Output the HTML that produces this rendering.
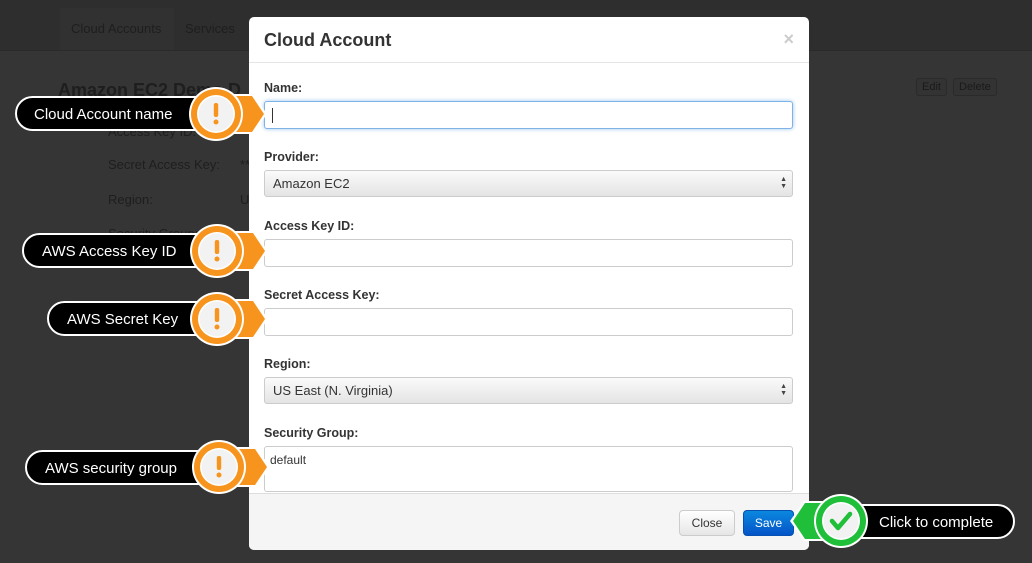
<!DOCTYPE html>
<html><head><meta charset="utf-8"><style>
body{margin:0;width:1032px;height:563px;overflow:hidden;background:#353535;font-family:"Liberation Sans",Arial,sans-serif;position:relative}
.top{position:absolute;left:0;top:0;width:1032px;height:50px;background:#2e2e2e;border-bottom:1px solid #2a2a2a}
.bg{position:absolute;color:#1e1e1e;font-size:13px}
.bgb{position:absolute;border:1px solid #2a2a2a;border-radius:3px;background:#333;color:#1a1a1a;font-size:11px;padding:2px 5px}
.modal{position:absolute;left:249px;top:17px;width:560px;height:533px;background:#fff;border-radius:5px;overflow:hidden}
.hd{height:45px;border-bottom:1px solid #e5e5e5;position:relative}
.hd h3{margin:0;position:absolute;left:15px;top:13px;font-size:18px;font-weight:bold;color:#333}
.x{position:absolute;right:15px;top:12px;font-size:18px;color:#ccc;font-weight:bold}
.lbl{position:absolute;left:15px;font-size:12.5px;font-weight:bold;color:#333}
.inp{position:absolute;left:15px;width:529px;height:26px;border:1px solid #ccc;border-radius:3px;box-sizing:border-box;background:#fff}
.sel{background:linear-gradient(#fafafa,#e4e4e4);font-size:13px;color:#333;padding:5px 8px}
.arr{position:absolute;right:5px;top:5px;font-size:7px;line-height:7px;color:#444}
.ft{position:absolute;left:0;top:476px;width:560px;height:57px;background:#f5f5f5;border-top:1px solid #ddd}
.btn{position:absolute;top:16px;height:26px;border-radius:4px;font-size:12px;box-sizing:border-box;text-align:center;line-height:24px}
</style></head><body>
<div class="top"></div>
<div style="position:absolute;left:60px;top:8px;width:114px;height:42px;background:#313131"></div>
<div class="bg" style="left:71px;top:21px">Cloud Accounts</div>
<div class="bg" style="left:185px;top:21px">Services</div>
<div class="bg" style="left:58px;top:80px;font-size:18px;font-weight:bold">Amazon EC2 Demo D</div>
<div class="bg" style="left:108px;top:124px">Access Key ID:</div>
<div class="bg" style="left:108px;top:157px">Secret Access Key:</div>
<div class="bg" style="left:240px;top:157px">**</div>
<div class="bg" style="left:108px;top:192px">Region:</div>
<div class="bg" style="left:240px;top:192px">U</div>
<div class="bg" style="left:108px;top:226px">Security Group:</div>
<div class="bgb" style="left:916px;top:78px">Edit</div>
<div class="bgb" style="left:953px;top:78px">Delete</div>

<div class="modal">
<div class="hd"><h3>Cloud Account</h3><span class="x">×</span></div>
<div class="lbl" style="top:64px">Name:</div>
<div class="inp" style="top:84px;height:28px;border-color:#7fb3e8;box-shadow:0 0 4px #9cc6ef"><div style="position:absolute;left:7px;top:6px;width:1px;height:15px;background:#333"></div></div>
<div class="lbl" style="top:133px">Provider:</div>
<div class="inp sel" style="top:153px;height:27px">Amazon EC2<div class="arr">▲<br>▼</div></div>
<div class="lbl" style="top:202px">Access Key ID:</div>
<div class="inp" style="top:222px;height:28px"></div>
<div class="lbl" style="top:271px">Secret Access Key:</div>
<div class="inp" style="top:291px;height:28px"></div>
<div class="lbl" style="top:340px">Region:</div>
<div class="inp sel" style="top:360px;height:27px">US East (N. Virginia)<div class="arr">▲<br>▼</div></div>
<div class="lbl" style="top:409px">Security Group:</div>
<div class="inp" style="top:429px;height:46px;font-size:12px;color:#333;padding:6px 5px">default</div>
<div class="ft">
<div class="btn" style="left:430px;width:56px;border:1px solid #ccc;background:linear-gradient(#fff,#e6e6e6);color:#333">Close</div>
<div class="btn" style="left:494px;width:51px;background:linear-gradient(#0a88e0,#0654c8);color:#fff;border:1px solid #0550b0">Save</div>
</div>
</div>

<svg width="1032" height="563" style="position:absolute;left:0;top:0" font-family="Liberation Sans,Arial,sans-serif">
<defs>
<g id="orange">
<path d="M0,-20 L37,-20 L51,0 L37,20 L0,20 Z" fill="#fff"/>
<path d="M0,-18 L36,-18 L48,0 L36,18 L0,18 Z" fill="#f7941d"/>
<circle r="27" fill="#fff"/><circle r="25" fill="#f7941d"/>
<circle r="19" fill="#fff"/><circle r="17.5" fill="#f2f2f2"/>
<rect x="-2.2" y="-11" width="4.4" height="14" rx="2" fill="#f7941d"/>
<circle cy="8" r="2.5" fill="#f7941d"/>
</g>
</defs>
<g>
<rect x="16" y="97" width="196" height="33" rx="16.5" fill="#000" stroke="#fff" stroke-width="2"/>
<text x="34" y="119" fill="#fff" font-size="15">Cloud Account name</text>
<use href="#orange" x="216" y="114"/>
</g>
<g>
<rect x="23" y="234" width="192" height="33" rx="16.5" fill="#000" stroke="#fff" stroke-width="2"/>
<text x="42" y="256" fill="#fff" font-size="15">AWS Access Key ID</text>
<use href="#orange" x="217" y="251"/>
</g>
<g>
<rect x="48" y="302" width="168" height="33" rx="16.5" fill="#000" stroke="#fff" stroke-width="2"/>
<text x="67" y="324" fill="#fff" font-size="15">AWS Secret Key</text>
<use href="#orange" x="217" y="319"/>
</g>
<g>
<rect x="26" y="451" width="192" height="33" rx="16.5" fill="#000" stroke="#fff" stroke-width="2"/>
<text x="45" y="473" fill="#fff" font-size="15">AWS security group</text>
<use href="#orange" x="219" y="467"/>
</g>
<g>
<rect x="830" y="505" width="184" height="33" rx="16.5" fill="#000" stroke="#fff" stroke-width="2"/>
<text x="879" y="527" fill="#fff" font-size="15">Click to complete</text>
<g transform="translate(841,521)">
<path d="M0,-20 L-37,-20 L-51,0 L-37,20 L0,20 Z" fill="#fff"/>
<path d="M0,-18 L-36,-18 L-48,0 L-36,18 L0,18 Z" fill="#1fbf3a"/>
<circle r="27" fill="#fff"/><circle r="25" fill="#1fbf3a"/>
<circle r="19" fill="#fff"/><circle r="17.5" fill="#f2f2f2"/>
<path d="M-9,0 L-3,7 L9,-7" fill="none" stroke="#1fbf3a" stroke-width="4.5" stroke-linecap="round" stroke-linejoin="round"/>
</g>
</g>
</svg>
</body></html>
